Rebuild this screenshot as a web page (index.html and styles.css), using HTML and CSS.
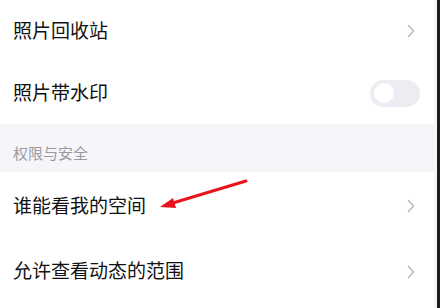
FILE: index.html
```html
<!DOCTYPE html>
<html lang="zh">
<head>
<meta charset="utf-8">
<link rel="stylesheet" href="styles.css">
</head>
<body>
<div class="screen">
  <div class="panel">
    <div class="row r1">
      <span class="label">照片回收站</span>
      <svg class="chev" width="8" height="14" viewBox="0 0 8 14"><path d="M1.5 1.5 L6.5 7 L1.5 12.5" fill="none" stroke="#b8b8be" stroke-width="1.5" stroke-linecap="round" stroke-linejoin="round"/></svg>
    </div>
    <div class="row r2">
      <span class="label">照片带水印</span>
      <span class="toggle"><span class="knob"></span></span>
    </div>
    <div class="section">权限与安全</div>
    <div class="row r3">
      <span class="label">谁能看我的空间</span>
      <svg class="chev" width="8" height="14" viewBox="0 0 8 14"><path d="M1.5 1.5 L6.5 7 L1.5 12.5" fill="none" stroke="#b8b8be" stroke-width="1.5" stroke-linecap="round" stroke-linejoin="round"/></svg>
    </div>
    <div class="row r4">
      <span class="label">允许查看动态的范围</span>
      <svg class="chev" width="8" height="14" viewBox="0 0 8 14"><path d="M1.5 1.5 L6.5 7 L1.5 12.5" fill="none" stroke="#b8b8be" stroke-width="1.5" stroke-linecap="round" stroke-linejoin="round"/></svg>
    </div>
    <svg class="arrow" width="100" height="40" viewBox="0 0 100 40">
      <line x1="94" y1="3" x2="14" y2="27" stroke="#e8141b" stroke-width="3" stroke-linecap="round"/>
      <path d="M8 29 L21 20 L24 30 Z" fill="#e8141b"/>
    </svg>
  </div>
  <div class="edge-light"></div>
  <div class="edge-dark"></div>
</div>
</body>
</html>
```
FILE: styles.css
```css
* { box-sizing: border-box; }
html, body { margin: 0; padding: 0; }
body {
  width: 440px;
  height: 308px;
  overflow: hidden;
  font-family: "Noto Sans CJK SC", "Noto Sans", sans-serif;
  background: #fff;
}
.screen {
  display: flex;
  height: 308px;
}
.panel {
  position: relative;
  width: 434px;
  display: flex;
  flex-direction: column;
  background: #fff;
}
.edge-light { width: 3px; background: #f6f6f8; }
.edge-dark { width: 3px; background: #1c1c1e; }
.row {
  display: flex;
  align-items: center;
  justify-content: space-between;
  padding: 0 19px 0 13px;
  height: 63px;
  flex: none;
}
.r1 { height: 62px; }
.r2 { height: 62px; padding-right: 14px; }
.r3 { height: 68px; }
.label {
  font-size: 19px;
  color: #111;
  padding-bottom: 4px;
}
.chev { display: block; }
.toggle {
  width: 50px;
  height: 27px;
  border-radius: 14px;
  background: #ececf3;
  display: flex;
  align-items: center;
  padding-left: 4px;
}
.knob {
  width: 20px;
  height: 20px;
  border-radius: 50%;
  background: #fff;
}
.section {
  height: 48px;
  flex: none;
  background: #f5f5fa;
  color: #9a9aa0;
  font-size: 15px;
  padding: 11px 0 0 13px;
  line-height: 36px;
}
.arrow {
  position: absolute;
  left: 152px;
  top: 178px;
}
```
